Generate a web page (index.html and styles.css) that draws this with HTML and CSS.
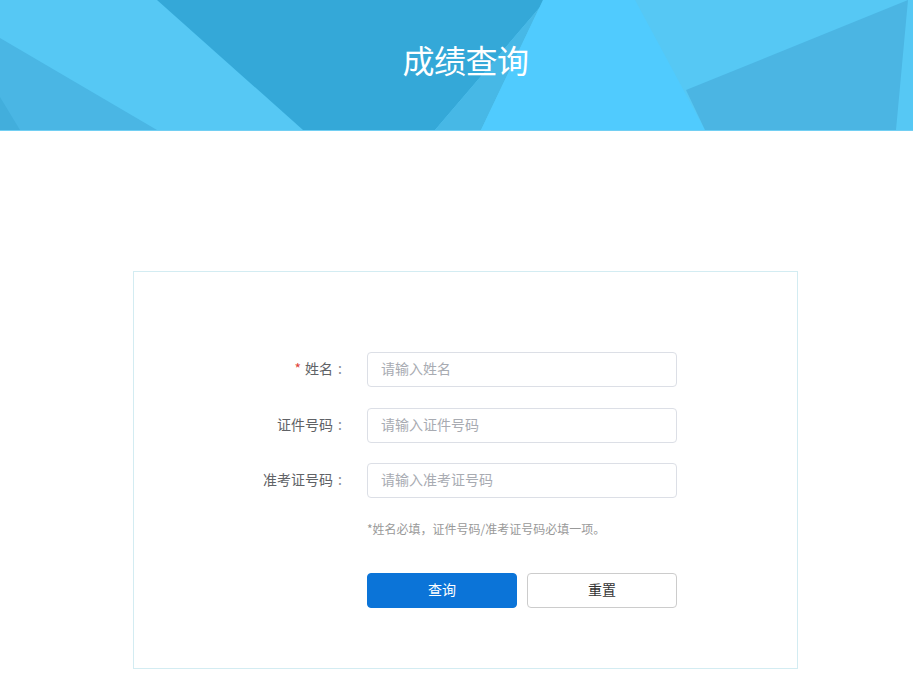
FILE: index.html
```html
<!DOCTYPE html>
<html lang="zh-CN">
<head>
<meta charset="utf-8">
<title>成绩查询</title>
<link rel="stylesheet" href="styles.css">
</head>
<body>
<header class="banner">
  <svg class="banner-bg" viewBox="0 0 913 130" preserveAspectRatio="none" aria-hidden="true">
    <rect x="0" y="0" width="913" height="130" fill="#56c8f4"/>
    <polygon points="0,38 157,130 0,130" fill="#4ab6e4"/>
    <polygon points="0,97 20,130 0,130" fill="#42aedc"/>
    <polygon points="157,0 546,0 435,130 303,130" fill="#34a8d8"/>
    <polygon points="546,0 543,0 481,130 435,130" fill="#47b8e6"/>
    <polygon points="543,0 635,0 705,130 481,130" fill="#50cbfe"/>
    <polygon points="686,90 908,0 896,130 705,130" fill="#4bb5e3"/>
  </svg>
  <div class="banner-inner">
    <h1 class="banner-title">成绩查询</h1>
  </div>
</header>

<main class="card">
  <form class="query-form">
    <div class="form-row">
      <label class="form-label"><span class="req">*</span>姓名<span class="colon">:</span></label>
      <input class="form-input" type="text" placeholder="请输入姓名">
    </div>
    <div class="form-row">
      <label class="form-label">证件号码<span class="colon">:</span></label>
      <input class="form-input" type="text" placeholder="请输入证件号码">
    </div>
    <div class="form-row">
      <label class="form-label">准考证号码<span class="colon">:</span></label>
      <input class="form-input" type="text" placeholder="请输入准考证号码">
    </div>
    <div class="form-row hint-row">
      <span class="form-label"></span>
      <p class="hint">*姓名必填，证件号码/准考证号码必填一项。</p>
    </div>
    <div class="form-row btn-row">
      <span class="form-label"></span>
      <div class="btns">
        <button type="button" class="btn btn-primary">查询</button>
        <button type="reset" class="btn btn-default">重置</button>
      </div>
    </div>
  </form>
</main>
</body>
</html>
```

FILE: styles.css
```css
* {
  box-sizing: border-box;
}

html, body {
  margin: 0;
  padding: 0;
  background: #ffffff;
}

body {
  font-family: "Noto Sans CJK SC", "Microsoft YaHei", "Noto Sans", sans-serif;
  color: #606266;
  font-size: 14px;
}

.banner {
  position: relative;
  height: 131px;
  border-bottom: 1px solid #72cff3;
  overflow: hidden;
}

.banner-bg {
  position: absolute;
  left: 0;
  top: 0;
  width: 100%;
  height: 130px;
  display: block;
}

.banner-inner {
  position: relative;
  width: 665px;
  margin-left: 133px;
  height: 130px;
  display: flex;
  align-items: center;
  justify-content: center;
  padding-bottom: 12px;
}

.banner-title {
  margin: 0;
  font-size: 32px;
  font-weight: 400;
  color: #ffffff;
  line-height: 40px;
  letter-spacing: -0.5px;
}

.card {
  width: 665px;
  margin: 140px 0 0 133px;
  border: 1px solid #d3ecf2;
  padding: 80px 0 60px 0;
}

.query-form {
  display: flex;
  flex-direction: column;
}

.form-row {
  display: flex;
  align-items: center;
  margin-bottom: 20.5px;
}

.form-label {
  width: 213px;
  flex: none;
  text-align: right;
  margin-right: 20px;
  font-size: 14px;
  color: #606266;
  line-height: 20px;
  padding-bottom: 3px;
}

.req {
  color: #e0463b;
  margin-right: 4px;
}

.colon {
  display: inline-block;
  width: 14px;
  text-align: center;
  color: #8a8d93;
}

.form-input {
  width: 310px;
  height: 35px;
  border: 1px solid #dcdfe6;
  border-radius: 4px;
  padding: 0 13px 3px 13px;
  font-family: inherit;
  font-size: 14px;
  color: #606266;
  background: #ffffff;
  outline: none;
}

.form-input::placeholder {
  color: #a8abb2;
}

.hint-row {
  margin-bottom: 0;
}

.hint {
  margin: 0;
  font-size: 12px;
  color: #999999;
  line-height: 20px;
  padding-bottom: 2px;
}

.btn-row {
  margin-top: 32px;
  margin-bottom: 0;
}

.btns {
  display: flex;
  gap: 10px;
}

.btn {
  width: 150px;
  height: 35px;
  border-radius: 4px;
  font-family: inherit;
  font-size: 14px;
  cursor: pointer;
  padding: 0 0 3px 0;
}

.btn-primary {
  background: #0b74d8;
  border: 1px solid #0b74d8;
  color: #ffffff;
}

.btn-default {
  background: #ffffff;
  border: 1px solid #cccccc;
  color: #333333;
}
```
